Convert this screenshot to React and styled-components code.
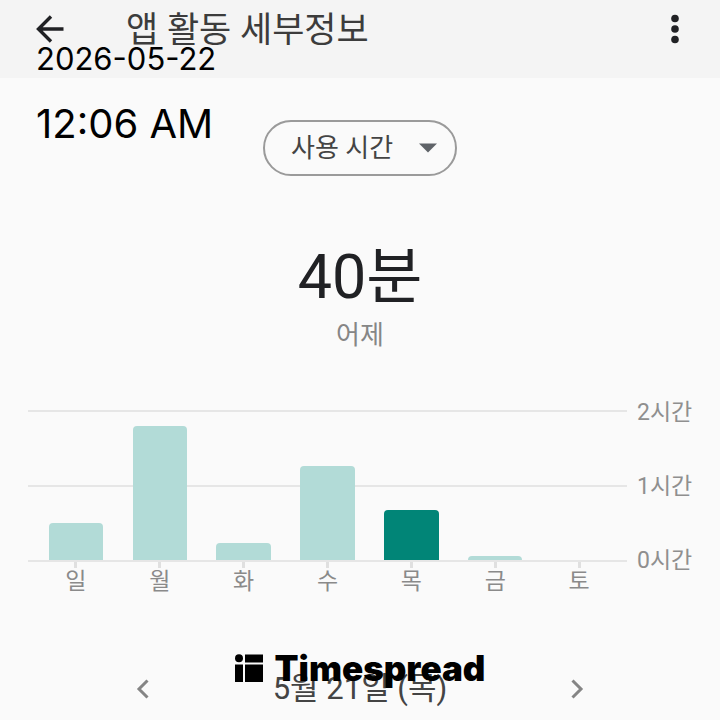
import React, { useState } from 'react';
import styled, { createGlobalStyle } from 'styled-components';

const GlobalStyle = createGlobalStyle`
  * {
    box-sizing: border-box;
  }

  body {
    margin: 0;
    background: #fafafa;
    color: #202124;
    font-family: Roboto, 'Noto Sans CJK KR', sans-serif;
  }

  button,
  select {
    font-family: inherit;
  }
`;

const Page = styled.div`
  position: relative;
  min-height: 100vh;
  overflow: hidden;
`;

const Header = styled.header`
  display: flex;
  align-items: flex-start;
  padding: 0 25px 16px 30px;
  background: #f4f4f4;
`;

const IconButton = styled.button`
  display: flex;
  align-items: center;
  justify-content: center;
  width: 40px;
  height: 58px;
  padding: 0;
  border: none;
  background: none;
  color: ${props => props.$color || '#202124'};
  cursor: pointer;
`;

const Title = styled.h1`
  flex: 1;
  margin: 0;
  padding-left: 56px;
  font-size: 35px;
  line-height: 62px;
  font-weight: 400;
  color: #3c3c3c;
`;

const Main = styled.main`
  display: flex;
  flex-direction: column;
  align-items: center;
  padding: 42px 28px 0;
`;

const SelectWrapper = styled.div`
  display: grid;
  align-items: center;
`;

const MetricSelect = styled.select`
  grid-area: 1 / 1;
  appearance: none;
  width: 194px;
  height: 56px;
  padding: 0 56px 0 26px;
  border: 2px solid #9a9a9a;
  border-radius: 28px;
  background: transparent;
  color: #444444;
  font-size: 26px;
  cursor: pointer;
`;

const SelectArrow = styled.svg`
  grid-area: 1 / 1;
  justify-self: end;
  margin-right: 20px;
  pointer-events: none;
`;

const Total = styled.p`
  margin: 60px 0 0;
  font-size: 61px;
  line-height: 82px;
`;

const TotalCaption = styled.p`
  margin: 0;
  font-size: 26px;
  line-height: 34px;
  color: #868686;
`;

const Chart = styled.section`
  display: grid;
  grid-template-columns: 1fr 65px;
  width: 100%;
  margin-top: 58px;
`;

const GridLines = styled.div`
  grid-area: 1 / 1;
  display: flex;
  flex-direction: column;
  justify-content: space-between;
  height: 152px;
`;

const GridLine = styled.div`
  height: 2px;
  background: #e6e6e6;
`;

const Bars = styled.div`
  grid-area: 1 / 1;
  display: grid;
  grid-template-columns: repeat(7, 1fr);
  padding: 0 6px;
`;

const Day = styled.div`
  display: flex;
  flex-direction: column;
  align-items: center;
`;

const BarSlot = styled.div`
  display: flex;
  align-items: flex-end;
  justify-content: center;
  width: 100%;
  height: 150px;
`;

const Bar = styled.div`
  width: 65%;
  border-radius: 4px 4px 0 0;
  background: ${props => (props.$active ? '#018577' : '#b2dbd7')};
`;

const Tick = styled.div`
  width: 3px;
  height: 6px;
  margin-top: 2px;
  background: #e0e0e0;
`;

const DayLabel = styled.span`
  font-size: 23px;
  line-height: 28px;
  color: #8a8a8a;
`;

const Axis = styled.div`
  grid-area: 1 / 2;
  display: flex;
  flex-direction: column;
  justify-content: space-between;
  height: 148px;
  padding-left: 10px;
`;

const AxisLabel = styled.span`
  display: flex;
  align-items: center;
  height: 0;
  font-size: 23px;
  color: #8f8f8f;
  white-space: nowrap;
`;

const DateNav = styled.nav`
  display: flex;
  align-items: center;
  justify-content: space-between;
  width: 100%;
  margin-top: 64px;
  padding: 0 95px;
`;

const CurrentDate = styled.span`
  font-size: 31px;
  line-height: 58px;
  color: #444444;
`;

// Stamp and logo lie on top of the screen content
const Stamp = styled.div`
  position: absolute;
  top: 40px;
  left: 36px;
  display: flex;
  flex-direction: column;
  gap: 26px;
  color: #000000;
  font-family: Inter, sans-serif;
  pointer-events: none;
`;

const StampDate = styled.time`
  font-size: 31px;
  line-height: 38px;
`;

const StampTime = styled.time`
  font-size: 40px;
  line-height: 40px;
`;

const Brand = styled.div`
  position: absolute;
  top: 648px;
  left: 0;
  right: 0;
  display: flex;
  align-items: center;
  justify-content: center;
  gap: 12px;
  color: #000000;
  font-family: Inter, sans-serif;
  font-size: 35px;
  line-height: 40px;
  font-weight: 900;
  pointer-events: none;
`;

const MAX_MINUTES = 120;

const days = [
  { label: '일', minutes: 30 },
  { label: '월', minutes: 107 },
  { label: '화', minutes: 14 },
  { label: '수', minutes: 75 },
  { label: '목', minutes: 40 },
  { label: '금', minutes: 3 },
  { label: '토', minutes: 0 }
];

const hours = ['2시간', '1시간', '0시간'];

const Chevron = ({ d }) => (
  <svg width="16" height="22" viewBox="0 0 16 22" fill="none" stroke="currentColor" strokeWidth="3">
    <path d={d} />
  </svg>
);

const App = () => {
  const [metric, setMetric] = useState('time');
  const [selected, setSelected] = useState(4);

  return (
    <Page>
      <GlobalStyle />
      <Header>
        <IconButton aria-label="뒤로">
          <svg width="30" height="28" viewBox="0 0 30 28" fill="none" stroke="currentColor" strokeWidth="3.4">
            <path d="M28.5 14H4M16 1.5L3.5 14L16 26.5" />
          </svg>
        </IconButton>
        <Title>앱 활동 세부정보</Title>
        <IconButton aria-label="더보기">
          <svg width="10" height="30" viewBox="0 0 10 30" fill="currentColor">
            <circle cx="5" cy="4.5" r="3.8" />
            <circle cx="5" cy="15" r="3.8" />
            <circle cx="5" cy="25.5" r="3.8" />
          </svg>
        </IconButton>
      </Header>

      <Main>
        <SelectWrapper>
          <MetricSelect
            aria-label="측정 항목"
            value={metric}
            onChange={(e) => setMetric(e.target.value)}
          >
            <option value="time">사용 시간</option>
            <option value="alerts">받은 알림</option>
            <option value="opens">연 횟수</option>
          </MetricSelect>
          <SelectArrow width="18" height="10" viewBox="0 0 18 10" fill="#5f6368">
            <path d="M0 0.5H18L9 9.5Z" />
          </SelectArrow>
        </SelectWrapper>

        <Total>40분</Total>
        <TotalCaption>어제</TotalCaption>

        <Chart aria-label="요일별 사용 시간">
          <GridLines>
            {hours.map(hour => (
              <GridLine key={hour} />
            ))}
          </GridLines>
          <Bars>
            {days.map((day, index) => (
              <Day key={day.label} onClick={() => setSelected(index)}>
                <BarSlot>
                  <Bar
                    $active={selected === index}
                    style={{ height: `${(day.minutes / MAX_MINUTES) * 100}%` }}
                  />
                </BarSlot>
                <Tick />
                <DayLabel>{day.label}</DayLabel>
              </Day>
            ))}
          </Bars>
          <Axis>
            {hours.map(hour => (
              <AxisLabel key={hour}>{hour}</AxisLabel>
            ))}
          </Axis>
        </Chart>

        <DateNav>
          <IconButton aria-label="이전 날짜" $color="#858585">
            <Chevron d="M12.5 2.5L4 11L12.5 19.5" />
          </IconButton>
          <CurrentDate>5월 21일 (목)</CurrentDate>
          <IconButton aria-label="다음 날짜" $color="#858585">
            <Chevron d="M3.5 2.5L12 11L3.5 19.5" />
          </IconButton>
        </DateNav>
      </Main>

      <Stamp>
        <StampDate>2026-05-22</StampDate>
        <StampTime>12:06 AM</StampTime>
      </Stamp>

      <Brand>
        <svg width="28" height="28" viewBox="0 0 28 28" fill="currentColor">
          <circle cx="4" cy="4.2" r="4" />
          <path d="M10 0.5H28V8.5H10ZM0 10.5H8V28H0ZM10 10.5H28V28H10Z" />
        </svg>
        <span>Timespread</span>
      </Brand>
    </Page>
  );
};

export default App;
